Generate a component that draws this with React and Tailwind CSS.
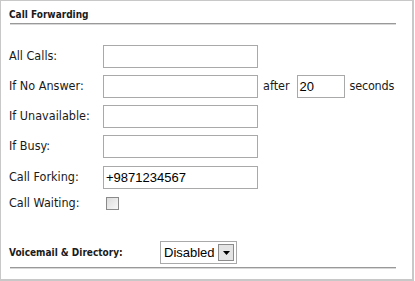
import React from 'react';

const rows = [
  { label: 'All Calls:', value: '' },
  { label: 'If No Answer:', value: '', after: true },
  { label: 'If Unavailable:', value: '' },
  { label: 'If Busy:', value: '' },
  { label: 'Call Forking:', value: '+9871234567' },
];

function TextBox({ value, className = '' }) {
  return (
    <div
      className={`h-[23px] border border-[#a9a9a9] bg-white flex items-center px-[2px] text-[13px] text-black font-['Liberation_Sans',sans-serif] ${className}`}
    >
      {value}
    </div>
  );
}

function Rule() {
  return (
    <div className="mx-[9px] w-[386px]">
      <div className="h-px bg-[#999]" />
      <div className="h-px bg-[#d8d8d8]" />
    </div>
  );
}

export default function App() {
  return (
    <div className="w-[415px] h-[281px] bg-white font-['DejaVu_Sans_Condensed','DejaVu_Sans',sans-serif] text-[#1a1a1a]">
      <div className="w-[414px] h-[281px] border border-[#c8c8c8] border-r-2 border-b-2">
        <div className="pl-[8px] pt-[6px] h-[22px] text-[10px] font-bold">Call Forwarding</div>
        <Rule />

        <div className="mt-[20px] flex flex-col gap-[7px]">
          {rows.map((r, i) => (
            <div key={r.label} className={`flex items-center h-[23px] ${i === 4 ? 'mt-px' : ''}`}>
              <div className="w-[102px] pl-[8px] text-[12.5px]">{r.label}</div>
              <TextBox value={r.value} className="w-[155px]" />
              {r.after && (
                <div className="flex items-center text-[12.5px]">
                  <span className="ml-[5px] mr-[7px]">after</span>
                  <TextBox value="20" className="w-[48px]" />
                  <span className="ml-[5px] tracking-[-0.2px]">seconds</span>
                </div>
              )}
            </div>
          ))}
          <div className="flex items-center h-[16px] -mt-px">
            <div className="w-[105px] pl-[8px] text-[12.5px]">Call Waiting:</div>
            <div className="w-[13px] h-[13px] border border-[#8a8a8a] bg-gradient-to-br from-[#dcdcdc] to-[#f8f8f8]" />
          </div>
        </div>

        <div className="mt-[30px] flex items-center h-[23px]">
          <div className="w-[159px] pl-[8px] text-[10px] font-bold">Voicemail &amp; Directory:</div>
          <div className="w-[77px] h-[23px] border border-[#a9a9a9] flex items-center justify-between pl-[3px] pr-[2px] text-[13px] text-black font-['Liberation_Sans',sans-serif]">
            <span>Disabled</span>
            <div className="w-[16px] h-[17px] border border-[#8c8c8c] bg-[#e4e4e4] flex items-center justify-center">
              <svg width="7" height="4" viewBox="0 0 7 4">
                <polygon points="0,0 7,0 3.5,4" fill="#000" />
              </svg>
            </div>
          </div>
        </div>
        <div className="mt-[3px]">
          <Rule />
        </div>
      </div>
    </div>
  );
}
